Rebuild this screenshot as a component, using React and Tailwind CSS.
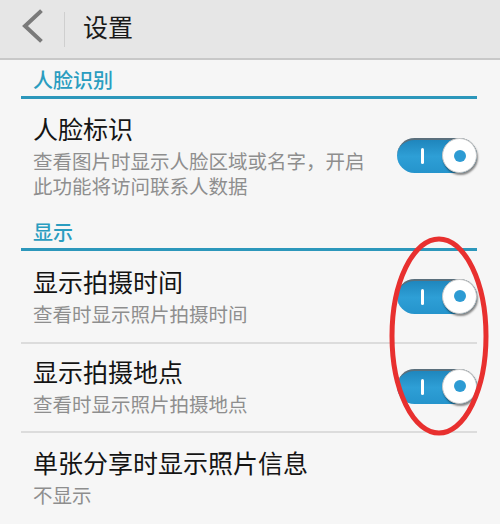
const font = { fontFamily: '"Noto Sans CJK SC", "Noto Sans", sans-serif' };

function Toggle() {
  return (
    <div className="relative w-[80px] h-[35px] shrink-0">
      <div className="absolute inset-0 rounded-full bg-gradient-to-b from-[#1f86bd] via-[#2e9fd6] to-[#2594cc] border-t-2 border-[#5a6f7c]" />
      <div className="absolute left-[24px] top-[10px] w-[3px] h-[16px] bg-white rounded-sm" />
      <div className="absolute right-0 top-0 w-[35px] h-[35px] rounded-full bg-white border border-[#c9c9c9] shadow-[1px_2px_2px_rgba(0,0,0,0.45)] flex items-center justify-center">
        <div className="w-[12px] h-[12px] rounded-full bg-[#2d9bd3]" />
      </div>
    </div>
  );
}

function SectionHeader({ title, pt }) {
  return (
    <div className={`ml-[21px] mr-[23px] border-b-[3px] border-[#2c97bb] pl-[12px] pb-[4px] ${pt}`}>
      <div className="text-[20px] leading-[24px] text-[#2a9dc0] font-medium">{title}</div>
    </div>
  );
}

function Item({ title, sub, toggle, pt, pb, divider }) {
  return (
    <div
      className={`ml-[21px] mr-[23px] flex items-center justify-between ${pt} ${pb} ${
        divider ? "border-b-2 border-[#dcdcdc]" : ""
      }`}
    >
      <div className="pl-[12px]">
        <div className="text-[25px] leading-[30px] text-[#141414]">{title}</div>
        <div className="mt-[5px] text-[19.5px] leading-[25px] text-[#8e8e8e]">{sub}</div>
      </div>
      {toggle && <Toggle />}
    </div>
  );
}

export default function App() {
  return (
    <div className="relative w-[500px] h-[524px] overflow-hidden bg-[#f6f6f6]" style={font}>
      <div className="h-[60px] bg-[#e6e6e6] border-b-2 border-[#c8c8c8] flex items-center">
        <svg width="64" height="58" viewBox="0 0 64 58" className="shrink-0">
          <path d="M40 12 L25 26 L40 40" fill="none" stroke="#7a7a7a" strokeWidth="4" strokeLinecap="square" />
        </svg>
        <div className="w-px h-[35px] bg-[#cfcfcf]" />
        <div className="ml-[18px] mb-[6px] text-[25px] leading-[30px] text-[#1a1a1a]">设置</div>
      </div>

      <SectionHeader title="人脸识别" pt="pt-[8px]" />
      <Item
        title="人脸标识"
        sub={
          <>
            查看图片时显示人脸区域或名字，开启
            <br />
            此功能将访问联系人数据
          </>
        }
        toggle
        pt="pt-[14px]"
        pb="pb-[10px]"
      />
      <SectionHeader title="显示" pt="pt-[12px]" />
      <Item title="显示拍摄时间" sub="查看时显示照片拍摄时间" toggle pt="pt-[15px]" pb="pb-[16px]" divider />
      <Item title="显示拍摄地点" sub="查看时显示照片拍摄地点" toggle pt="pt-[12px]" pb="pb-[15px]" divider />
      <Item title="单张分享时显示照片信息" sub="不显示" pt="pt-[14px]" pb="pb-[10px]" />

      <svg className="absolute left-0 top-0 pointer-events-none" width="500" height="524">
        <ellipse cx="439" cy="336" rx="47" ry="97" fill="none" stroke="#e8302f" strokeWidth="5" />
      </svg>
    </div>
  );
}
